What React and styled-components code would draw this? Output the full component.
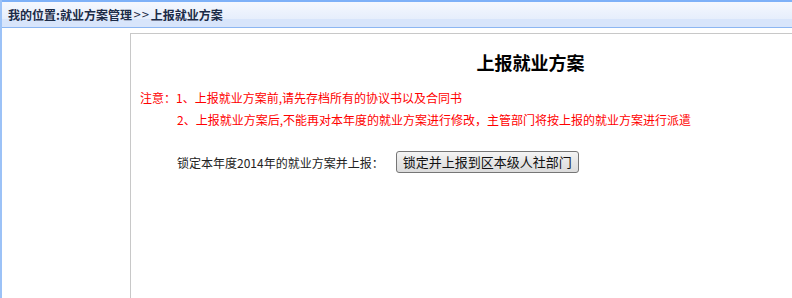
import React from "react";
import styled, { createGlobalStyle } from "styled-components";

const Global = createGlobalStyle`
  html, body { margin: 0; padding: 0; background: #fff; overflow: hidden; }
  body { font-family: "Noto Sans CJK SC", "Noto Sans", sans-serif; font-size: 12px; }
`;

const Frame = styled.div`
  height: 298px;
  border-left: 2px solid #9cc2f7;
  box-sizing: border-box;
  display: flex;
  flex-direction: column;
  overflow: hidden;
`;

const Header = styled.div`
  height: 28px;
  flex-shrink: 0;
  box-sizing: border-box;
  border-top: 2px solid #7eb1f8;
  border-bottom: 1px solid #8cb6f2;
  background: linear-gradient(to bottom, #f5f8fe 0%, #e6eefc 68%, #d8e5fb 68%, #d8e5fb 100%);
  display: flex;
  align-items: center;
  padding-left: 6px;
  font-weight: bold;
  font-size: 12px;
  color: #1c2b47;
  white-space: nowrap;
`;

const Arrow = styled.span`
  font-weight: normal;
  font-family: "DejaVu Sans", sans-serif;
  font-size: 10px;
  margin: 0 1px;
`;

const Body = styled.div`
  flex: 1;
  min-width: 0;
  padding: 5px 0 0 128px;
  display: flex;
  overflow: hidden;
`;

const Panel = styled.div`
  width: 800px;
  flex-shrink: 0;
  border-top: 1px solid #c8c8c8;
  border-left: 1px solid #c8c8c8;
  padding-top: 16px;
  box-sizing: border-box;
`;

const Title = styled.h1`
  margin: 0;
  text-align: center;
  font-size: 18px;
  line-height: 24px;
  font-weight: bold;
  color: #000;
`;

const Notes = styled.div`
  margin-top: 13px;
  padding-left: 9px;
  color: #ff0000;
  font-size: 12px;
  line-height: 22px;
`;

const NoteLine = styled.div`
  padding-left: ${(p) => (p.$indent ? "37px" : "0")};
  white-space: nowrap;
`;

const ActionRow = styled.div`
  margin-top: 19px;
  padding-left: 46px;
  height: 24px;
  display: flex;
  align-items: center;
  color: #222;
  font-size: 12px;
  white-space: nowrap;
`;

const Button = styled.button`
  margin-left: 12px;
  height: 22px;
  padding: 0 6px;
  border: 1px solid #767676;
  border-radius: 3px;
  background: linear-gradient(to bottom, #f4f4f4 0%, #e6e6e6 50%, #dcdcdc 100%);
  font-family: "Noto Sans CJK SC", "Noto Sans", sans-serif;
  font-size: 13px;
  line-height: 20px;
  color: #111;
`;

export default function App() {
  return (
    <>
      <Global />
      <Frame>
        <Header>
          我的位置:就业方案管理<Arrow>&gt;&gt;</Arrow>上报就业方案
        </Header>
        <Body>
          <Panel>
            <Title>上报就业方案</Title>
            <Notes>
              <NoteLine>注意：1、上报就业方案前,请先存档所有的协议书以及合同书</NoteLine>
              <NoteLine $indent>
                2、上报就业方案后,不能再对本年度的就业方案进行修改，主管部门将按上报的就业方案进行派遣
              </NoteLine>
            </Notes>
            <ActionRow>
              锁定本年度2014年的就业方案并上报：
              <Button type="button">锁定并上报到区本级人社部门</Button>
            </ActionRow>
          </Panel>
        </Body>
      </Frame>
    </>
  );
}
